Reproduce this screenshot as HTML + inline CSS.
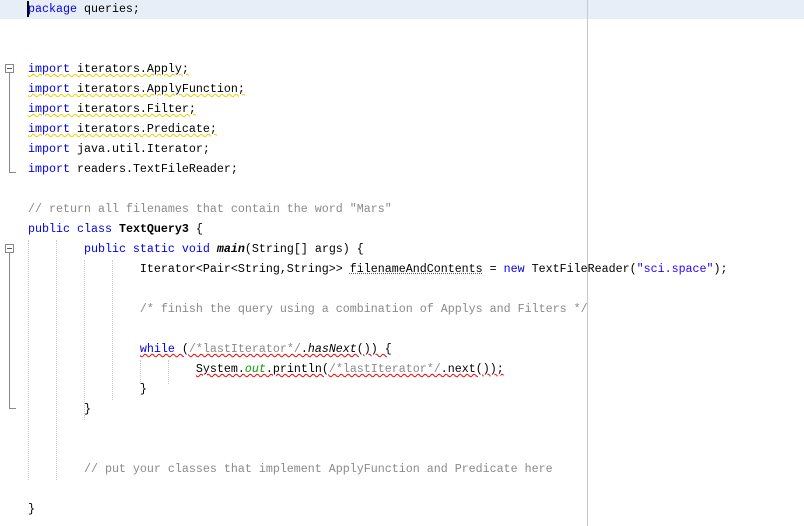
<!DOCTYPE html>
<html><head><style>
body{margin:0;width:804px;height:526px;background:#fff;position:relative;overflow:hidden;font-family:"Liberation Mono",monospace;font-size:11.67px;}
.l{position:absolute;left:28px;height:20px;line-height:20px;white-space:pre;color:#000;}
.k{color:#0000e6}.c{color:#8a8a8a}.s{color:#2a00ff}.b{font-weight:bold}
.o{color:#0a9a0a;font-style:italic}
.y{text-decoration:underline wavy #e8d000;text-decoration-thickness:1px}
.r{text-decoration:underline wavy #e00;text-decoration-thickness:1px}
.d{text-decoration:underline dotted #666}
.g{position:absolute;width:0;border-left:1px dotted #ccc}
.f{position:absolute;left:5px;width:9px;height:9px;border:1px solid #888;background:#fff;box-sizing:border-box}
.f:after{content:"";position:absolute;left:1px;top:3px;width:5px;height:1px;background:#555}
</style></head><body>
<div style="position:absolute;left:0;top:0;width:804px;height:19px;background:#e8eef8"></div>
<div style="position:absolute;left:587px;top:0;width:1px;height:526px;background:#c8c8c8"></div>
<div style="position:absolute;left:27px;top:1px;width:2px;height:16px;background:#000"></div>
<div class="g" style="left:28px;top:240px;height:240px"></div>
<div class="g" style="left:56px;top:240px;height:240px"></div>
<div class="g" style="left:84px;top:260px;height:160px"></div>
<div class="g" style="left:112px;top:260px;height:140px"></div>
<div class="g" style="left:140px;top:360px;height:24px"></div>
<div class="g" style="left:168px;top:360px;height:24px"></div>
<div class="f" style="top:64px"></div>
<div style="position:absolute;left:9px;top:73px;width:1px;height:100px;background:#888"></div>
<div style="position:absolute;left:9px;top:172px;width:7px;height:1px;background:#888"></div>
<div class="f" style="top:244px"></div>
<div style="position:absolute;left:9px;top:253px;width:1px;height:156px;background:#888"></div>
<div style="position:absolute;left:9px;top:408px;width:7px;height:1px;background:#888"></div>
<div class="l" style="top:-1px"><span class="k">package</span> queries;</div>
<div class="l" style="top:59px"><span class="y"><span class="k">import</span> iterators.Apply;</span></div>
<div class="l" style="top:79px"><span class="y"><span class="k">import</span> iterators.ApplyFunction;</span></div>
<div class="l" style="top:99px"><span class="y"><span class="k">import</span> iterators.Filter;</span></div>
<div class="l" style="top:119px"><span class="y"><span class="k">import</span> iterators.Predicate;</span></div>
<div class="l" style="top:139px"><span class="k">import</span> java.util.Iterator;</div>
<div class="l" style="top:159px"><span class="k">import</span> readers.TextFileReader;</div>
<div class="l c" style="top:199px">// return all filenames that contain the word "Mars"</div>
<div class="l" style="top:219px"><span class="k">public class</span> <span class="b">TextQuery3</span> {</div>
<div class="l" style="top:239px">        <span class="k">public static void</span> <span class="b" style="font-style:italic">main</span>(String[] args) {</div>
<div class="l" style="top:259px">                Iterator&lt;Pair&lt;String,String&gt;&gt; <span class="d">filenameAndContents</span> = <span class="k">new</span> TextFileReader(<span class="s">"sci.space"</span>);</div>
<div class="l c" style="top:299px">                /* finish the query using a combination of Applys and Filters */</div>
<div class="l" style="top:339px">                <span class="r"><span class="k">while</span> (<span class="c">/*lastIterator*/</span>.<i>hasNext</i>()) {</span></div>
<div class="l" style="top:359px">                        <span class="r">System.<span class="o">out</span>.println(<span class="c">/*lastIterator*/</span>.next());</span></div>
<div class="l" style="top:379px">                }</div>
<div class="l" style="top:399px">        }</div>
<div class="l c" style="top:459px">        // put your classes that implement ApplyFunction and Predicate here</div>
<div class="l" style="top:499px">}</div>
</body></html>
